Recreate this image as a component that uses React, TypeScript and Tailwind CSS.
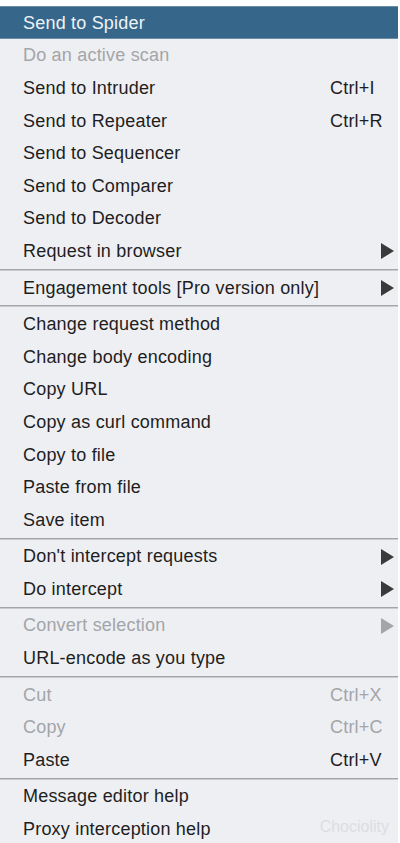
type Item = {
  label: string;
  shortcut?: string;
  submenu?: boolean;
  disabled?: boolean;
  active?: boolean;
};

type Entry = Item | "sep";

const entries: Entry[] = [
  { label: "Send to Spider", active: true },
  { label: "Do an active scan", disabled: true },
  { label: "Send to Intruder", shortcut: "Ctrl+I" },
  { label: "Send to Repeater", shortcut: "Ctrl+R" },
  { label: "Send to Sequencer" },
  { label: "Send to Comparer" },
  { label: "Send to Decoder" },
  { label: "Request in browser", submenu: true },
  "sep",
  { label: "Engagement tools [Pro version only]", submenu: true },
  "sep",
  { label: "Change request method" },
  { label: "Change body encoding" },
  { label: "Copy URL" },
  { label: "Copy as curl command" },
  { label: "Copy to file" },
  { label: "Paste from file" },
  { label: "Save item" },
  "sep",
  { label: "Don't intercept requests", submenu: true },
  { label: "Do intercept", submenu: true },
  "sep",
  { label: "Convert selection", submenu: true, disabled: true },
  { label: "URL-encode as you type" },
  "sep",
  { label: "Cut", shortcut: "Ctrl+X", disabled: true },
  { label: "Copy", shortcut: "Ctrl+C", disabled: true },
  { label: "Paste", shortcut: "Ctrl+V" },
  "sep",
  { label: "Message editor help" },
  { label: "Proxy interception help" },
];

function Arrow({ disabled }: { disabled?: boolean }) {
  return (
    <svg width="13" height="16" viewBox="0 0 13 16" className="shrink-0">
      <polygon points="0,0 13,8 0,16" fill={disabled ? "#a3a5a8" : "#3a3a3a"} />
    </svg>
  );
}

function Row({ item }: { item: Item }) {
  const color = item.active
    ? "text-[#eef3f7]"
    : item.disabled
      ? "text-[#a3a5a8]"
      : "text-[#1e1e1e]";
  return (
    <div
      className={`flex h-[32.6px] shrink-0 items-center pl-[23px] pt-[2px] ${
        item.active ? "bg-[#36678a] border-y border-[#6a8ca6]" : ""
      } ${color}`}
    >
      <span className="flex-1 whitespace-nowrap">{item.label}</span>
      {item.shortcut && <span className="w-[68px] shrink-0">{item.shortcut}</span>}
      {item.submenu && (
        <span className="mr-[4px] flex w-[13px] items-center">
          <Arrow disabled={item.disabled} />
        </span>
      )}
    </div>
  );
}

export default function App() {
  return (
    <div className="h-[843px] w-[400px] overflow-hidden bg-white pt-[6px]">
      <div
        className="relative flex w-[398px] flex-col bg-[#eeeff3] text-[18px] tracking-[0.2px]"
        style={{ fontFamily: '"Liberation Sans", Arial, sans-serif' }}
      >
        {entries.map((e, i) =>
          e === "sep" ? (
            <div key={i} className="flex h-[4px] shrink-0 flex-col pt-[2px]">
              <div className="h-px bg-[#a3a5a9]" />
              <div className="h-px bg-[#c9cbcf]" />
            </div>
          ) : (
            <Row key={i} item={e} />
          ),
        )}
        <span className="absolute bottom-[6px] right-[9px] text-[16px] tracking-normal text-[#dcdde1]">
          Chociolity
        </span>
      </div>
    </div>
  );
}
